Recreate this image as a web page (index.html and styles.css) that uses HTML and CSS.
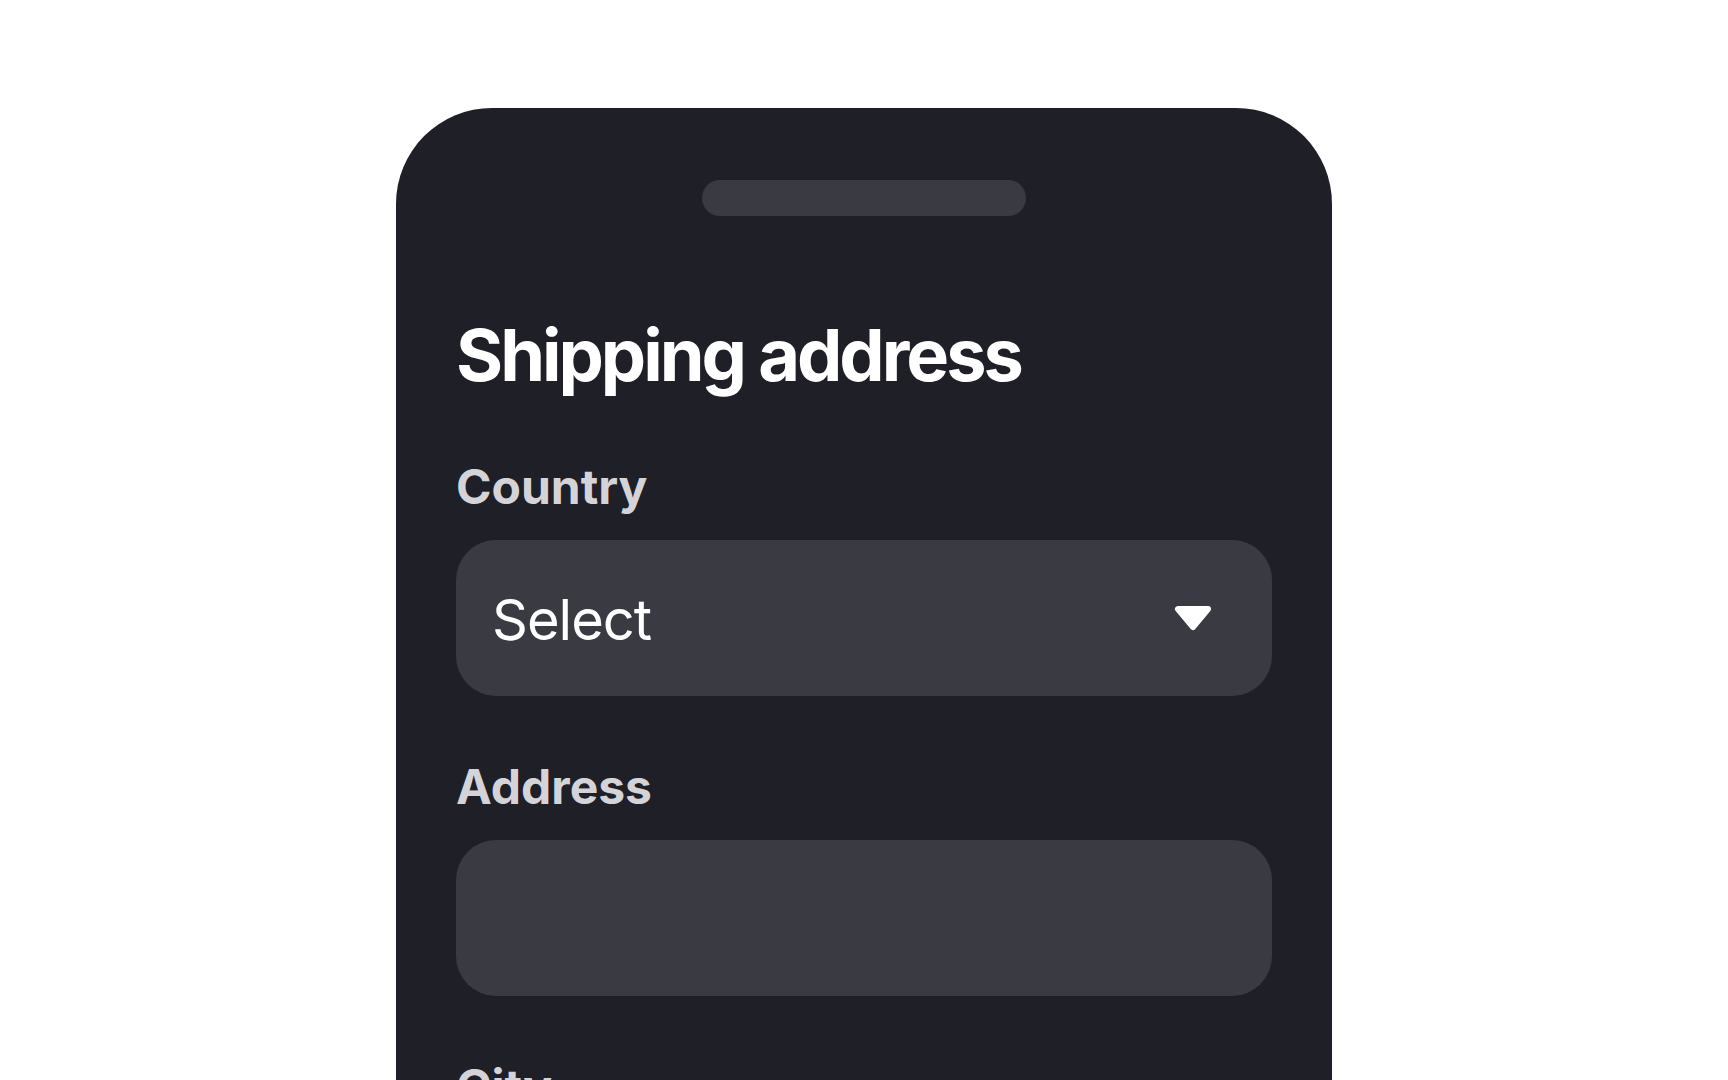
FILE: index.html
```html
<!DOCTYPE html>
<html lang="en">
<head>
<meta charset="utf-8">
<title>Shipping address</title>
<link rel="stylesheet" href="styles.css">
</head>
<body>
<div class="sheet">
  <div class="handle"></div>
  <h1 class="title">Shipping address</h1>
  <div class="field">
    <label class="label">Country</label>
    <div class="input select">
      <span class="value">Select</span>
      <svg class="caret" width="38" height="26" viewBox="0 0 38 26"><path d="M4 4 L34 4 L19 22 Z" fill="#fff" stroke="#fff" stroke-width="6" stroke-linejoin="round"/></svg>
    </div>
  </div>
  <div class="field">
    <label class="label">Address</label>
    <div class="input"></div>
  </div>
  <div class="field">
    <label class="label">City</label>
    <div class="input"></div>
  </div>
</div>
</body>
</html>
```
FILE: styles.css
```css
html, body {
  margin: 0;
  padding: 0;
  background: #ffffff;
  overflow: hidden;
  height: 1080px;
}
body {
  font-family: Inter, "Liberation Sans", sans-serif;
}
.sheet {
  width: 936px;
  margin: 108px auto 0;
  background: #1f1f27;
  border-radius: 96px 96px 0 0;
  padding: 72px 60px 200px;
  box-sizing: border-box;
  display: flex;
  flex-direction: column;
}
.handle {
  align-self: center;
  width: 324px;
  height: 36px;
  border-radius: 18px;
  background: #3a3a43;
}
.title {
  margin: 96px 0 0;
  font-size: 72px;
  line-height: 1.2;
  font-weight: 700;
  letter-spacing: -3px;
  color: #ffffff;
}
.field {
  display: flex;
  flex-direction: column;
  gap: 24px;
  margin-top: 60px;
}
.field + .field {
  margin-top: 62px;
}
.label {
  font-size: 48px;
  line-height: 1.2;
  font-weight: 700;
  color: #d4d4d8;
}
.input {
  height: 156px;
  border-radius: 40px;
  background: #3a3a43;
  box-sizing: border-box;
}
.select {
  display: flex;
  align-items: center;
  justify-content: space-between;
  padding: 4px 60px 0 36px;
}
.value {
  font-size: 56px;
  letter-spacing: -1px;
  color: #ffffff;
  font-weight: 400;
}
.caret {
  display: block;
  margin-top: -4px;
}
```
